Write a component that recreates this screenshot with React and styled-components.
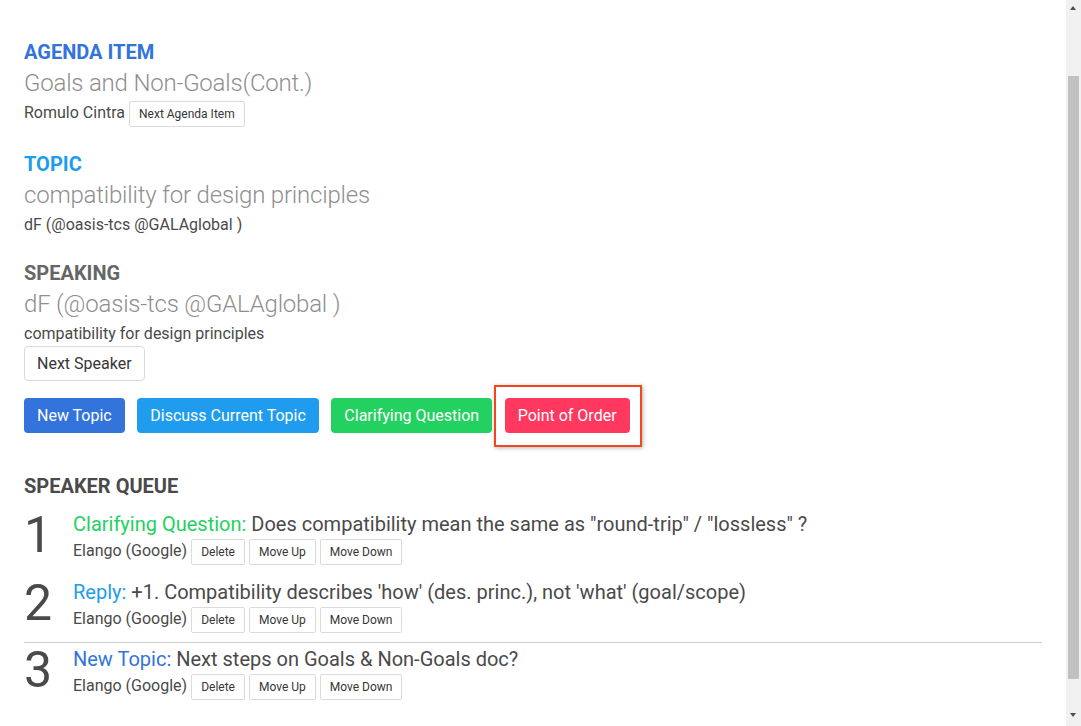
import React from 'react';
import styled, { createGlobalStyle } from 'styled-components';

const GlobalStyle = createGlobalStyle`
  body {
    margin: 0;
    background: #ffffff;
    font-family: Roboto, "Liberation Sans", Arial, sans-serif;
    color: #4a4a4a;
    font-size: 16px;
  }
  * {
    box-sizing: border-box;
  }
`;

const Page = styled.div`
  padding: 40px 39px 16px 24px;
`;

const Scrollbar = styled.div`
  position: fixed;
  top: 0;
  right: 0;
  bottom: 0;
  width: 15px;
  background: #f1f1f1;
`;

const Thumb = styled.div`
  position: absolute;
  top: 76px;
  left: 2px;
  right: 2px;
  height: 603px;
  background: #c1c1c1;
`;

const Arrow = styled.div`
  position: absolute;
  left: 4px;
  ${(p) => (p.down ? 'bottom: 9px;' : 'top: 6px;')}
  width: 0;
  height: 0;
  border-left: 3.5px solid transparent;
  border-right: 3.5px solid transparent;
  ${(p) => (p.down ? 'border-top' : 'border-bottom')}: 4px solid #505050;
`;

const Section = styled.section`
  margin-bottom: 24.5px;
`;

const Label = styled.h3`
  margin: 0 0 3px;
  font-size: 20px;
  line-height: 25px;
  font-weight: 700;
  color: ${(p) => p.color || '#4a4a4a'};
`;

const Title = styled.h2`
  margin: 0;
  font-family: "Roboto Light", Roboto, "Liberation Sans", sans-serif;
  font-size: 24px;
  line-height: 30px;
  font-weight: 300;
  letter-spacing: -0.2px;
  color: #8f8f8f;
`;

const Meta = styled.div`
  display: flex;
  align-items: baseline;
  gap: 4px;
  margin-top: ${(p) => p.offset || 3}px;
  font-size: 16px;
  line-height: 24px;
`;

const Button = styled.button`
  font-family: inherit;
  display: inline-flex;
  align-items: center;
  justify-content: center;
  cursor: pointer;
  border: 1px solid ${(p) => (p.bg ? 'transparent' : '#dbdbdb')};
  background: ${(p) => p.bg || '#ffffff'};
  color: ${(p) => (p.bg ? '#ffffff' : '#363636')};
  font-size: ${(p) => (p.small ? '12px' : '16px')};
  height: ${(p) => (p.small ? '26px' : '35px')};
  padding: 0 ${(p) => (p.small ? '9px' : '12px')};
  border-radius: ${(p) => (p.small ? '2px' : '4px')};
  white-space: nowrap;
`;

const ActionRow = styled.div`
  display: flex;
  gap: 12.5px;
  margin-top: 17px;
`;

const Marked = styled.span`
  position: relative;
  display: inline-flex;
  &::after {
    content: '';
    position: absolute;
    top: -13px;
    left: -11px;
    right: -12px;
    bottom: -14px;
    border: 2px solid #f2461c;
    box-shadow: 1px 1px 4px rgba(0, 0, 0, 0.3);
    pointer-events: none;
  }
`;

const QueueHeading = styled.h3`
  margin: 41px 0 11px;
  font-size: 20px;
  line-height: 25px;
  font-weight: 700;
  color: #4a4a4a;
`;

const Divider = styled.hr`
  border: none;
  height: 1px;
  background: #cfcfcf;
  margin: 9px 0 2px;
`;

const Item = styled.div`
  display: flex;
  align-items: flex-start;
  & + & {
    margin-top: 13px;
  }
`;

const Number = styled.div`
  width: 49px;
  flex: none;
  font-size: 50px;
  line-height: 50px;
  font-weight: 400;
  color: #4a4a4a;
`;

const ItemBody = styled.div`
  display: flex;
  flex-direction: column;
`;

const ItemText = styled.div`
  font-size: 20px;
  line-height: 28px;
`;

const Kind = styled.span`
  color: ${(p) => p.color};
`;

const speakerQueue = [
  {
    kind: 'Clarifying Question:',
    color: '#23d160',
    text: 'Does compatibility mean the same as "round-trip" / "lossless" ?',
  },
  {
    kind: 'Reply:',
    color: '#209cee',
    text: "+1. Compatibility describes 'how' (des. princ.), not 'what' (goal/scope)",
  },
  {
    kind: 'New Topic:',
    color: '#3273dc',
    text: 'Next steps on Goals & Non-Goals doc?',
    divided: true,
  },
];

const QueueItem = ({ n, entry }) => (
  <Item>
    <Number>{n}</Number>
    <ItemBody>
      <ItemText>
        <Kind color={entry.color}>{entry.kind}</Kind> {entry.text}
      </ItemText>
      <Meta offset={1}>
        <span>Elango (Google)</span>
        <Button small>Delete</Button>
        <Button small>Move Up</Button>
        <Button small>Move Down</Button>
      </Meta>
    </ItemBody>
  </Item>
);

const App = () => (
  <>
    <GlobalStyle />
    <Page>
      <Section>
        <Label color="#3273dc">AGENDA ITEM</Label>
        <Title>Goals and Non-Goals(Cont.)</Title>
        <Meta>
          <span>Romulo Cintra</span>
          <Button small>Next Agenda Item</Button>
        </Meta>
      </Section>

      <Section>
        <Label color="#209cee">TOPIC</Label>
        <Title>compatibility for design principles</Title>
        <Meta>
          <span>dF (@oasis-tcs @GALAglobal )</span>
        </Meta>
      </Section>

      <div>
        <Label color="#666666">SPEAKING</Label>
        <Title>dF (@oasis-tcs @GALAglobal )</Title>
        <Meta>
          <span>compatibility for design principles</span>
        </Meta>
        <Button>Next Speaker</Button>
        <ActionRow>
          <Button bg="#3273dc">New Topic</Button>
          <Button bg="#209cee">Discuss Current Topic</Button>
          <Button bg="#23d160">Clarifying Question</Button>
          <Marked>
            <Button bg="#ff3860">Point of Order</Button>
          </Marked>
        </ActionRow>
      </div>

      <QueueHeading>SPEAKER QUEUE</QueueHeading>
      {speakerQueue.map((entry, i) => (
        <React.Fragment key={i}>
          {entry.divided && <Divider />}
          <QueueItem n={i + 1} entry={entry} />
        </React.Fragment>
      ))}
    </Page>
    <Scrollbar>
      <Arrow />
      <Thumb />
      <Arrow down />
    </Scrollbar>
  </>
);

export default App;
